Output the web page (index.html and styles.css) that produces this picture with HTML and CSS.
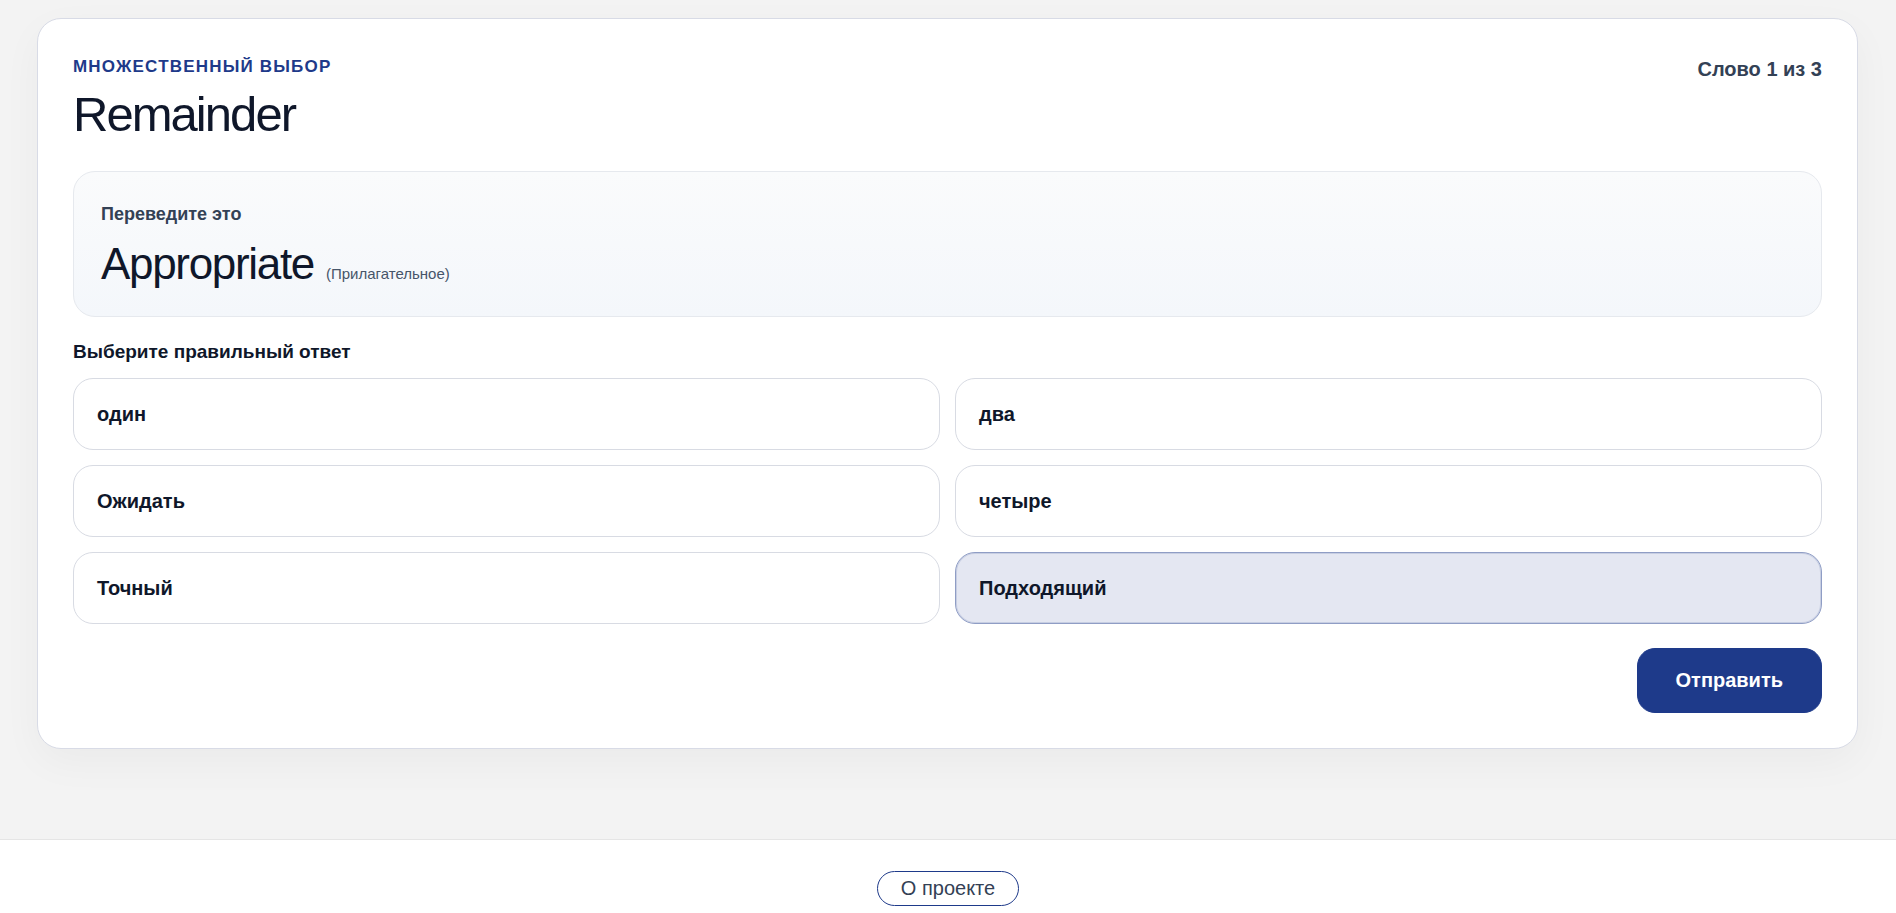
FILE: index.html
```html
<!DOCTYPE html>
<html lang="ru">
<head>
<meta charset="utf-8">
<meta name="viewport" content="width=device-width, initial-scale=1">
<title>Множественный выбор</title>
<link rel="stylesheet" href="styles.css">
</head>
<body>
<main class="page">
  <section class="card">
    <header class="card-header">
      <div class="heading">
        <p class="eyebrow">Множественный выбор</p>
        <h1 class="title">Remainder</h1>
      </div>
      <p class="progress">Слово 1 из 3</p>
    </header>
    <div class="prompt">
      <p class="prompt-label">Переведите это</p>
      <p class="prompt-line">
        <span class="prompt-word">Appropriate</span>
        <span class="prompt-pos">(Прилагательное)</span>
      </p>
    </div>
    <h2 class="question" id="question">Выберите правильный ответ</h2>
    <div class="options" role="group" aria-labelledby="question">
      <button class="option" type="button" aria-pressed="false">один</button>
      <button class="option" type="button" aria-pressed="false">два</button>
      <button class="option" type="button" aria-pressed="false">Ожидать</button>
      <button class="option" type="button" aria-pressed="false">четыре</button>
      <button class="option" type="button" aria-pressed="false">Точный</button>
      <button class="option selected" type="button" aria-pressed="true">Подходящий</button>
    </div>
    <div class="actions">
      <button class="submit" type="button">Отправить</button>
    </div>
  </section>
</main>
<footer class="footer">
  <a class="about" href="#">О проекте</a>
</footer>
</body>
</html>
```
FILE: styles.css
```css
* {
  box-sizing: border-box;
}

body {
  margin: 0;
  min-height: 100vh;
  display: flex;
  flex-direction: column;
  background: #f3f3f3;
  color: #0f172a;
  font-family: "Liberation Sans", Arial, sans-serif;
}

p,
h1,
h2 {
  margin: 0;
}

button {
  font-family: inherit;
  cursor: pointer;
}

.page {
  padding: 18px 38px 90px 37px;
}

.card {
  padding: 35px;
  border: 1px solid #d8dbe6;
  border-radius: 24px;
  background: #fff;
  box-shadow: 0 13px 40px rgba(0, 0, 0, 0.04);
}

.card-header {
  display: flex;
  justify-content: space-between;
  align-items: flex-start;
  gap: 16px;
  margin-bottom: 29px;
}

.eyebrow {
  color: #1e3a8a;
  font-size: 17px;
  font-weight: 700;
  line-height: 26px;
  letter-spacing: 0.07em;
  text-transform: uppercase;
}

.title {
  margin-top: 6px;
  font-size: 49px;
  font-weight: 400;
  line-height: 56px;
  letter-spacing: -0.04em;
}

.progress {
  color: #334155;
  font-size: 20px;
  font-weight: 700;
  line-height: 30px;
}

.prompt {
  padding: 28px 27px 27px;
  border: 1px solid #e6e9ee;
  border-radius: 22px;
  background: linear-gradient(180deg, #fafbfc, #f4f7fb);
}

.prompt-label {
  color: #334155;
  font-size: 18px;
  font-weight: 700;
  line-height: 28px;
}

.prompt-line {
  display: flex;
  flex-wrap: wrap;
  align-items: baseline;
  gap: 12px;
  margin-top: 11px;
}

.prompt-word {
  font-size: 44px;
  line-height: 50px;
  letter-spacing: -0.03em;
}

.prompt-pos {
  color: #475569;
  font-size: 15px;
}

.question {
  margin: 20px 0 11px;
  font-size: 19px;
  font-weight: 700;
  line-height: 30px;
}

.options {
  display: grid;
  grid-template-columns: 1fr 1fr;
  gap: 15px;
}

.option {
  padding: 20px 23px;
  border: 1px solid #d8dbe3;
  border-radius: 20px;
  background: #fff;
  color: #0f172a;
  font-size: 20px;
  font-weight: 700;
  line-height: 30px;
  text-align: left;
}

.option.selected {
  border-color: #8f9dc5;
  background: #e4e7f2;
  box-shadow: inset 0 0 0 1px #c7cee2;
}

.actions {
  display: flex;
  justify-content: flex-end;
  margin-top: 24px;
}

.submit {
  padding: 17px 38px;
  border: 1px solid #1e3a8a;
  border-radius: 18px;
  background: #1e3a8a;
  color: #fff;
  font-size: 20px;
  font-weight: 700;
  line-height: 29px;
}

.footer {
  flex: 1;
  display: flex;
  justify-content: center;
  align-items: flex-start;
  padding-top: 31px;
  border-top: 1px solid #e5e5e5;
  background: #fff;
}

.about {
  padding: 2px 23px;
  border: 1px solid #1e3a8a;
  border-radius: 20px;
  color: #334155;
  font-size: 20px;
  line-height: 29px;
  text-decoration: none;
}
```
